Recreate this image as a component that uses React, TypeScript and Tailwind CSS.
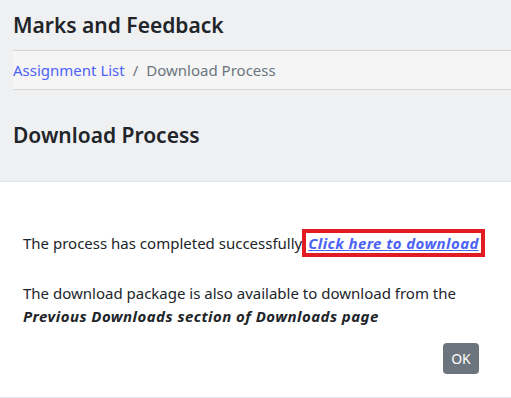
export default function App() {
  return (
    <div className="min-h-[398px] w-[511px] bg-white font-['Noto_Sans',sans-serif] text-[#212529]">
      <div className="border-b border-[#dee2e6] bg-[#eff0f2] pl-[13px]">
        <h1 className="flex h-[50px] items-center text-[21px] font-semibold leading-none">Marks and Feedback</h1>
        <nav className="flex h-[40px] items-center gap-2 border-y border-[#d4d4d4] bg-[#f5f5f6] text-[15px]">
          <a className="text-[#4d63f5]">Assignment List</a>
          <span className="text-[#6c757d]">/</span>
          <span className="text-[#6c757d]">Download Process</span>
        </nav>
        <h2 className="flex h-[91px] items-center text-[21px] font-semibold leading-none">Download Process</h2>
      </div>
      <div className="border-b border-[#dee2e6] px-[23px] pt-[47px] pb-[23px] text-[15px] leading-[23px]">
        <p className="flex items-center">
          <span>The process has completed successfully</span>
          <span className="border-4 border-[#e31b23] px-[2px] leading-[20px]">
            <a className="font-bold italic tracking-[0.4px] text-[#4d63f5] underline">Click here to download</a>
          </span>
        </p>
        <p className="mt-[25px]">
          The download package is also available to download from the
          <br />
          <b className="italic tracking-[0.45px]">Previous Downloads section of Downloads page</b>
        </p>
        <div className="mt-[15px] flex justify-end pr-[9px]">
          <button className="h-[31px] w-[36px] rounded bg-[#6c757d] text-[14px] text-white">OK</button>
        </div>
      </div>
    </div>
  );
}
